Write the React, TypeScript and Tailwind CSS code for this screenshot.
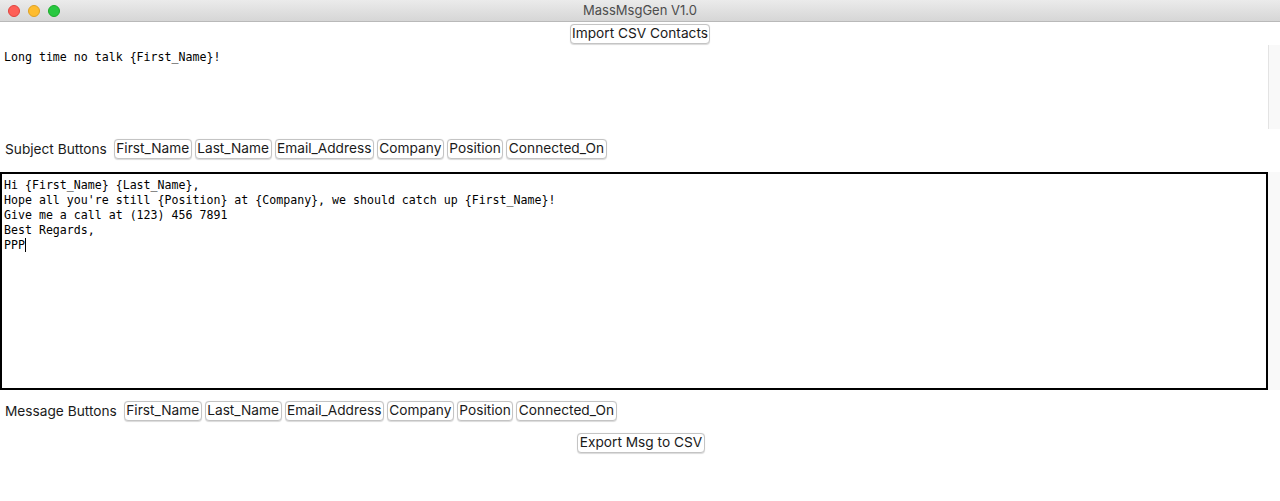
import React from 'react';

const fields = ['First_Name', 'Last_Name', 'Email_Address', 'Company', 'Position', 'Connected_On'];

const MacButton: React.FC<{ label: string; className?: string }> = ({ label, className }) => (
  <button
    className={`h-[20px] px-[1.5px] rounded-[4px] border border-[#c4c4c4] bg-white text-[13.7px] leading-none text-[#1a1a1a] shadow-[0_0.5px_1px_rgba(0,0,0,0.15)] ${className ?? ''}`}
  >
    {label}
  </button>
);

const ButtonRow: React.FC<{ title: string }> = ({ title }) => (
  <div className="flex items-center gap-[3px] pl-[5px]">
    <span className="mr-[4px] text-[13.7px] text-[#1a1a1a]">{title}</span>
    {fields.map((f) => (
      <MacButton key={f} label={f} />
    ))}
  </div>
);

const message = [
  'Hi {First_Name} {Last_Name},',
  "Hope all you're still {Position} at {Company}, we should catch up {First_Name}!",
  'Give me a call at (123) 456 7891',
  'Best Regards,',
];

export default function App() {
  return (
    <div className="w-[1280px] h-[501px] bg-white overflow-hidden font-['Inter','Liberation_Sans',Arial,sans-serif]">
      {/* Title bar */}
      <div className="relative h-[22px] flex items-center justify-center bg-gradient-to-b from-[#ebebeb] to-[#d6d6d6] border-b border-[#b9b9b9]">
        <div className="absolute left-[8px] top-[5px] flex gap-[8px]">
          <span className="w-[12px] h-[12px] rounded-full bg-[#fe5f57] border border-[#e0443e]" />
          <span className="w-[12px] h-[12px] rounded-full bg-[#febc2e] border border-[#dea123]" />
          <span className="w-[12px] h-[12px] rounded-full bg-[#28c840] border border-[#1aab29]" />
        </div>
        <span className="text-[13px] text-[#4d4d4d]">MassMsgGen V1.0</span>
      </div>

      {/* Import */}
      <div className="flex justify-center pt-[2px]">
        <MacButton label="Import CSV Contacts" />
      </div>

      {/* Subject area */}
      <div className="flex h-[84px] mt-[1px]">
        <div className="flex-1 pl-[4px] pt-[5px] font-['DejaVu_Sans_Mono',monospace] text-[11.6px] leading-[15px] text-black">
          Long time no talk {'{First_Name}'}!
        </div>
        <div className="w-[12px] bg-[#f9f9f9] border-l border-[#e3e3e3]" />
      </div>

      <div className="pt-[10px] pb-[12px]">
        <ButtonRow title="Subject Buttons" />
      </div>

      {/* Message area */}
      <div className="flex h-[218px]">
        <div className="flex-1 border-2 border-black pl-[2px] pt-[4px] font-['DejaVu_Sans_Mono',monospace] text-[11.6px] leading-[15px] text-black whitespace-pre">
          {message.map((l) => (
            <div key={l}>{l}</div>
          ))}
          <div className="flex items-center">
            PPP<span className="inline-block w-[1px] h-[14px] bg-black" />
          </div>
        </div>
        <div className="w-[12px] bg-[#f9f9f9]" />
      </div>

      <div className="pt-[11px]">
        <ButtonRow title="Message Buttons" />
      </div>

      <div className="flex justify-center pt-[12px] pl-[2px]">
        <MacButton label="Export Msg to CSV" />
      </div>
    </div>
  );
}
